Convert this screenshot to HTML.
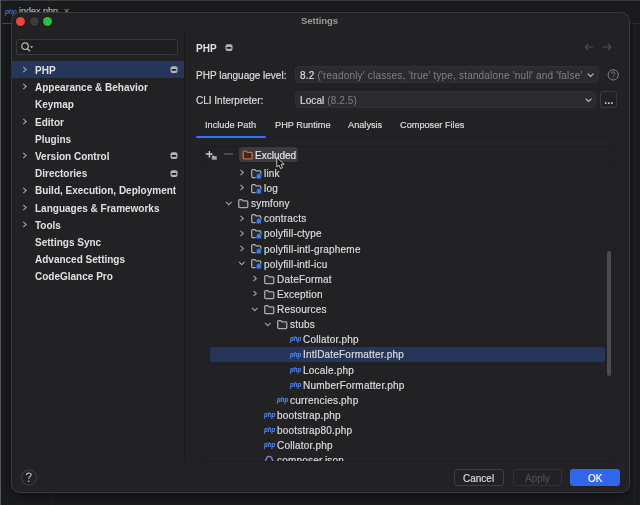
<!DOCTYPE html>
<html><head><meta charset="utf-8"><style>
html,body{margin:0;padding:0;width:640px;height:505px;overflow:hidden;background:#1a1b1d;}
body{position:relative;font-family:"Liberation Sans",sans-serif;}
.t{position:absolute;white-space:pre;will-change:transform;}
.r{position:absolute;}
svg.r{overflow:visible}
</style></head><body>
<div class="r" style="left:0.00px;top:0.00px;width:640.00px;height:1.00px;background:#3a3b3d;border-radius:0px;"></div>
<div class="r" style="left:0.00px;top:0.00px;width:1.20px;height:505.00px;background:#55565a;border-radius:0px;"></div>
<div class="r" style="left:51.00px;top:493.00px;width:1.00px;height:12.00px;background:#232426;border-radius:0px;"></div>
<div class="t" style="left:4.50px;top:7.95px;font-size:7px;line-height:8.05px;color:#3d6fd6;font-weight:400;letter-spacing:0px;-webkit-text-stroke:0.2px #3d6fd6;font-style:italic;">php</div>
<div class="t" style="left:19.00px;top:6.31px;font-size:9px;line-height:10.35px;color:#b8b8ba;font-weight:400;letter-spacing:0px;-webkit-text-stroke:0.18px #b8b8ba;">index.php</div>
<div class="t" style="left:64.00px;top:6.31px;font-size:9px;line-height:10.35px;color:#8a8a8c;font-weight:400;letter-spacing:0px;-webkit-text-stroke:0.18px #8a8a8c;">×</div>
<div class="r" style="left:2.00px;top:22.60px;width:9.00px;height:1.20px;background:#4a4b4d;border-radius:0px;"></div>
<div class="r" style="left:630.00px;top:22.50px;width:10.00px;height:1.00px;background:#2c2d2f;border-radius:0px;"></div>
<div class="r" style="left:634.00px;top:23.00px;width:1.00px;height:482.00px;background:#202123;border-radius:0px;"></div>
<div class="r" style="left:11px;top:12px;width:619px;height:481px;background:#222224;border-radius:9px;box-sizing:border-box;border:1px solid #3a3b3d;box-shadow:0 4px 10px rgba(0,0,0,0.35);"></div>
<div class="r" style="left:15.70px;top:17.10px;width:9px;height:9px;border-radius:50%;background:#f0453f;box-shadow:0 0 0 0.7px rgba(0,0,0,0.35)"></div>
<div class="r" style="left:29.50px;top:17.10px;width:9px;height:9px;border-radius:50%;background:#3c3c3f;box-shadow:0 0 0 0.7px rgba(0,0,0,0.35)"></div>
<div class="r" style="left:43.30px;top:17.10px;width:9px;height:9px;border-radius:50%;background:#2cbf3a;box-shadow:0 0 0 0.7px rgba(0,0,0,0.35)"></div>
<div class="t" style="left:301.25px;top:16.30px;font-size:9.5px;line-height:10.92px;color:#9c9c9e;font-weight:700;letter-spacing:-0.05px;">Settings</div>
<div class="r" style="left:184.00px;top:32.00px;width:1.00px;height:429.00px;background:#1b1b1d;border-radius:0px;"></div>
<div class="r" style="left:12.00px;top:461.00px;width:617.00px;height:1.00px;background:#1f1f21;border-radius:0px;"></div>
<div class="r" style="left:16.30px;top:39.00px;width:162.00px;height:15.60px;background:#1f1f21;border:1px solid #3a3a3d;box-sizing:border-box;border-radius:3px;"></div>
<svg class="r" style="left:19.50px;top:41.20px;" width="16" height="12" viewBox="0 0 16 12"><circle cx="5" cy="5.2" r="3.3" fill="none" stroke="#b8b8ba" stroke-width="1.2"/><line x1="7.4" y1="7.6" x2="10" y2="10.2" stroke="#b8b8ba" stroke-width="1.3"/><path d="M10.2 5.2 L13.2 5.2 L11.7 7.2 Z" fill="#b8b8ba"/></svg>
<div class="r" style="left:11.00px;top:61.30px;width:173.00px;height:17.20px;background:#26355a;border-radius:0px;"></div>
<div class="t" style="left:34.50px;top:65.08px;font-size:10px;line-height:11.50px;color:#dfe0e2;font-weight:700;letter-spacing:0px;">PHP</div>
<svg class="r" style="left:22.00px;top:66.10px;" width="6" height="7" viewBox="0 0 6 7"><path d="M1.2 0.8 L4.2 3.5 L1.2 6.2" fill="none" stroke="#a0a1a4" stroke-width="1.1"/></svg>
<svg class="r" style="left:170.30px;top:66.40px;" width="8" height="7" viewBox="0 0 8 7"><rect x="0.5" y="0.3" width="7" height="6.6" rx="2" fill="#b4b5b8"/><rect x="1.7" y="2.9" width="4.6" height="1.9" rx="0.4" fill="#1a2340"/></svg>
<div class="t" style="left:34.50px;top:82.28px;font-size:10px;line-height:11.50px;color:#dfe0e2;font-weight:700;letter-spacing:0px;">Appearance &amp; Behavior</div>
<svg class="r" style="left:22.00px;top:83.30px;" width="6" height="7" viewBox="0 0 6 7"><path d="M1.2 0.8 L4.2 3.5 L1.2 6.2" fill="none" stroke="#a0a1a4" stroke-width="1.1"/></svg>
<div class="t" style="left:34.50px;top:99.48px;font-size:10px;line-height:11.50px;color:#dfe0e2;font-weight:700;letter-spacing:0px;">Keymap</div>
<div class="t" style="left:34.50px;top:116.68px;font-size:10px;line-height:11.50px;color:#dfe0e2;font-weight:700;letter-spacing:0px;">Editor</div>
<svg class="r" style="left:22.00px;top:117.70px;" width="6" height="7" viewBox="0 0 6 7"><path d="M1.2 0.8 L4.2 3.5 L1.2 6.2" fill="none" stroke="#a0a1a4" stroke-width="1.1"/></svg>
<div class="t" style="left:34.50px;top:133.89px;font-size:10px;line-height:11.50px;color:#dfe0e2;font-weight:700;letter-spacing:0px;">Plugins</div>
<div class="t" style="left:34.50px;top:151.09px;font-size:10px;line-height:11.50px;color:#dfe0e2;font-weight:700;letter-spacing:0px;">Version Control</div>
<svg class="r" style="left:22.00px;top:152.10px;" width="6" height="7" viewBox="0 0 6 7"><path d="M1.2 0.8 L4.2 3.5 L1.2 6.2" fill="none" stroke="#a0a1a4" stroke-width="1.1"/></svg>
<svg class="r" style="left:170.30px;top:152.40px;" width="8" height="7" viewBox="0 0 8 7"><rect x="0.5" y="0.3" width="7" height="6.6" rx="2" fill="#b4b5b8"/><rect x="1.7" y="2.9" width="4.6" height="1.9" rx="0.4" fill="#18181a"/></svg>
<div class="t" style="left:34.50px;top:168.28px;font-size:10px;line-height:11.50px;color:#dfe0e2;font-weight:700;letter-spacing:0px;">Directories</div>
<svg class="r" style="left:170.30px;top:169.60px;" width="8" height="7" viewBox="0 0 8 7"><rect x="0.5" y="0.3" width="7" height="6.6" rx="2" fill="#b4b5b8"/><rect x="1.7" y="2.9" width="4.6" height="1.9" rx="0.4" fill="#18181a"/></svg>
<div class="t" style="left:34.50px;top:185.48px;font-size:10px;line-height:11.50px;color:#dfe0e2;font-weight:700;letter-spacing:0px;">Build, Execution, Deployment</div>
<svg class="r" style="left:22.00px;top:186.50px;" width="6" height="7" viewBox="0 0 6 7"><path d="M1.2 0.8 L4.2 3.5 L1.2 6.2" fill="none" stroke="#a0a1a4" stroke-width="1.1"/></svg>
<div class="t" style="left:34.50px;top:202.69px;font-size:10px;line-height:11.50px;color:#dfe0e2;font-weight:700;letter-spacing:0px;">Languages &amp; Frameworks</div>
<svg class="r" style="left:22.00px;top:203.70px;" width="6" height="7" viewBox="0 0 6 7"><path d="M1.2 0.8 L4.2 3.5 L1.2 6.2" fill="none" stroke="#a0a1a4" stroke-width="1.1"/></svg>
<div class="t" style="left:34.50px;top:219.88px;font-size:10px;line-height:11.50px;color:#dfe0e2;font-weight:700;letter-spacing:0px;">Tools</div>
<svg class="r" style="left:22.00px;top:220.90px;" width="6" height="7" viewBox="0 0 6 7"><path d="M1.2 0.8 L4.2 3.5 L1.2 6.2" fill="none" stroke="#a0a1a4" stroke-width="1.1"/></svg>
<div class="t" style="left:34.50px;top:237.09px;font-size:10px;line-height:11.50px;color:#dfe0e2;font-weight:700;letter-spacing:0px;">Settings Sync</div>
<div class="t" style="left:34.50px;top:254.28px;font-size:10px;line-height:11.50px;color:#dfe0e2;font-weight:700;letter-spacing:0px;">Advanced Settings</div>
<div class="t" style="left:34.50px;top:271.49px;font-size:10px;line-height:11.50px;color:#dfe0e2;font-weight:700;letter-spacing:0px;">CodeGlance Pro</div>
<div class="t" style="left:195.75px;top:42.78px;font-size:10px;line-height:11.50px;color:#dfe0e2;font-weight:700;letter-spacing:0px;">PHP</div>
<svg class="r" style="left:225.30px;top:44.20px;" width="8" height="7" viewBox="0 0 8 7"><rect x="0.5" y="0.3" width="7" height="6.6" rx="2" fill="#b4b5b8"/><rect x="1.7" y="2.9" width="4.6" height="1.9" rx="0.4" fill="#18181a"/></svg>
<svg class="r" style="left:584.00px;top:42.00px;" width="30" height="10" viewBox="0 0 30 10"><path d="M1.4 5 H9.3 M1.4 5 L4.3 2 M1.4 5 L4.3 8" fill="none" stroke="#4d4e52" stroke-width="1.1"/><path d="M26.9 5 H19 M26.9 5 L24 2 M26.9 5 L24 8" fill="none" stroke="#4d4e52" stroke-width="1.1"/></svg>
<div class="t" style="left:195.75px;top:70.18px;font-size:10px;line-height:11.50px;color:#dcdddf;font-weight:400;letter-spacing:0px;-webkit-text-stroke:0.18px #dcdddf;">PHP language level:</div>
<div class="r" style="left:295.00px;top:66.00px;width:304.00px;height:17.40px;background:#2b2b2e;border:1px solid #313134;box-sizing:border-box;border-radius:3.5px;"></div>
<div class="t" style="left:299.80px;top:70.18px;font-size:10px;line-height:11.50px;color:#dcdddf;font-weight:400;letter-spacing:0.18px;-webkit-text-stroke:0.18px #dcdddf;">8.2 <span style="color:#7f8084;-webkit-text-stroke:0">('readonly' classes, 'true' type, standalone 'null' and 'false'</span></div>
<svg class="r" style="left:586.00px;top:72.00px;" width="9" height="6" viewBox="0 0 9 6"><path d="M1.7 1.6 L4.6 4.4 L7.5 1.6" fill="none" stroke="#b9babd" stroke-width="1.2"/></svg>
<svg class="r" style="left:607.20px;top:67.70px;" width="13" height="13" viewBox="0 0 13 13"><circle cx="6.2" cy="6.9" r="5.1" fill="none" stroke="#838488" stroke-width="1"/><path d="M4.6 5.5 Q4.6 3.9 6.2 3.9 Q7.8 3.9 7.8 5.3 Q7.8 6.2 6.8 6.8 Q6.2 7.2 6.2 8.2" fill="none" stroke="#838488" stroke-width="0.95"/><circle cx="6.2" cy="9.8" r="0.55" fill="#838488"/></svg>
<div class="t" style="left:195.75px;top:94.88px;font-size:10px;line-height:11.50px;color:#dcdddf;font-weight:400;letter-spacing:0px;-webkit-text-stroke:0.18px #dcdddf;">CLI Interpreter:</div>
<div class="r" style="left:295.00px;top:91.00px;width:301.30px;height:16.60px;background:#2b2b2e;border:1px solid #313134;box-sizing:border-box;border-radius:3.5px;"></div>
<div class="t" style="left:299.80px;top:94.88px;font-size:10px;line-height:11.50px;color:#dcdddf;font-weight:400;letter-spacing:0.1px;-webkit-text-stroke:0.18px #dcdddf;">Local <span style="color:#7f8084;-webkit-text-stroke:0">(8.2.5)</span></div>
<svg class="r" style="left:583.80px;top:97.00px;" width="9" height="6" viewBox="0 0 9 6"><path d="M1.7 1.6 L4.6 4.4 L7.5 1.6" fill="none" stroke="#b9babd" stroke-width="1.2"/></svg>
<div class="r" style="left:600.00px;top:91.00px;width:17.00px;height:17.00px;background:#222224;border:1px solid #3a3a3d;box-sizing:border-box;border-radius:3px;"></div>
<svg class="r" style="left:603.00px;top:101.00px;" width="12" height="4" viewBox="0 0 12 4"><rect x="1.9" y="1.2" width="1.6" height="1.7" rx="0.3" fill="#d0d1d4"/><rect x="5.0" y="1.2" width="1.6" height="1.7" rx="0.3" fill="#d0d1d4"/><rect x="8.1" y="1.2" width="1.6" height="1.7" rx="0.3" fill="#d0d1d4"/></svg>
<div class="t" style="left:204.80px;top:120.12px;font-size:9.2px;line-height:10.58px;color:#dcdddf;font-weight:400;letter-spacing:0px;-webkit-text-stroke:0.18px #dcdddf;">Include Path</div>
<div class="t" style="left:274.90px;top:120.12px;font-size:9.2px;line-height:10.58px;color:#dcdddf;font-weight:400;letter-spacing:0px;-webkit-text-stroke:0.18px #dcdddf;">PHP Runtime</div>
<div class="t" style="left:348.10px;top:120.12px;font-size:9.2px;line-height:10.58px;color:#dcdddf;font-weight:400;letter-spacing:0px;-webkit-text-stroke:0.18px #dcdddf;">Analysis</div>
<div class="t" style="left:400.20px;top:120.12px;font-size:9.2px;line-height:10.58px;color:#dcdddf;font-weight:400;letter-spacing:0px;-webkit-text-stroke:0.18px #dcdddf;">Composer Files</div>
<div class="r" style="left:196.00px;top:136.30px;width:418.00px;height:1.00px;background:#1e1e20;border-radius:0px;"></div>
<div class="r" style="left:196.00px;top:135.60px;width:69.80px;height:2.20px;background:#3574f0;border-radius:1px;"></div>
<div class="r" style="left:201.50px;top:146.00px;width:412.50px;height:315.50px;background:transparent;border:1px solid #1d1d1f;box-sizing:border-box;border-radius:0px;"></div>
<div class="r" style="left:202.00px;top:162.30px;width:411.00px;height:1.00px;background:#1f1f21;border-radius:0px;"></div>
<svg class="r" style="left:204.00px;top:149.00px;" width="16" height="12" viewBox="0 0 16 12"><path d="M5.4 2 V8.5 M1.8 5 H8.6" stroke="#c9cacd" stroke-width="1.4"/><path d="M7.6 6.8 Q7.6 6.3 8.1 6.3 H9.6 L10.2 6.9 H12.5 Q13 6.9 13 7.4 V10.4 Q13 10.9 12.5 10.9 H8.1 Q7.6 10.9 7.6 10.4 Z" fill="#a9aaad" stroke="#222224" stroke-width="0.6"/></svg>
<div class="r" style="left:223.80px;top:153.40px;width:9.20px;height:1.30px;background:#48494c;border-radius:0px;"></div>
<div class="r" style="left:239.00px;top:147.00px;width:59.00px;height:15.00px;background:#3a3b3e;border-radius:3px;"></div>
<svg class="r" style="left:241.50px;top:149.50px;" width="11" height="10" viewBox="0 0 11 10"><path d="M1.2 2 Q1.2 1.1 2.1 1.1 H4.2 L5.4 2.3 H9.2 Q10.1 2.3 10.1 3.2 V7.9 Q10.1 8.8 9.2 8.8 H2.1 Q1.2 8.8 1.2 7.9 Z" fill="#3b2a21" stroke="#c46b42" stroke-width="1.35" stroke-linejoin="round"/></svg>
<div class="t" style="left:254.50px;top:150.09px;font-size:10px;line-height:11.50px;color:#e2e3e5;font-weight:400;letter-spacing:0px;-webkit-text-stroke:0.18px #e2e3e5;">Excluded</div>
<div class="r" style="left:202px;top:163px;width:411px;height:298.3px;overflow:hidden">
<div class="r" style="left:8.30px;top:183.50px;width:394.30px;height:15.00px;background:#26355a;border-radius:3px;"></div>
<div class="r" style="left:404.90px;top:87.80px;width:4.60px;height:125.60px;background:#4c4c4e;border-radius:2.3px;"></div>
<div class="t" style="left:62.20px;top:4.88px;font-size:10px;line-height:11.50px;color:#dcdddf;font-weight:400;letter-spacing:0.2px;-webkit-text-stroke:0.18px #dcdddf;">link</div>
<svg class="r" style="left:37.40px;top:6.20px;" width="6" height="7" viewBox="0 0 6 7"><path d="M1.5 0.8 L4.3 3.5 L1.5 6.2" fill="none" stroke="#a0a1a4" stroke-width="1.1"/></svg>
<svg class="r" style="left:49.40px;top:5.60px;" width="11" height="11" viewBox="0 0 11 11"><path d="M0.7 1.7 Q0.7 0.7 1.7 0.7 H3.9 L5.1 1.9 H8.8 Q9.8 1.9 9.8 2.9 V7.5 Q9.8 8.5 8.8 8.5 H1.7 Q0.7 8.5 0.7 7.5 Z" fill="#262a33" stroke="#acadb0" stroke-width="1.25" stroke-linejoin="round"/><path d="M5.1 9.9 V6.5 Q5.1 6 5.5 5.7 L7.4 4.1 Q7.8 3.8 8.2 4.1 L10.1 5.7 Q10.5 6 10.5 6.5 V9.9 Z" fill="#3d7bf2" stroke="#222224" stroke-width="0.9" stroke-linejoin="round"/></svg>
<div class="t" style="left:62.20px;top:20.01px;font-size:10px;line-height:11.50px;color:#dcdddf;font-weight:400;letter-spacing:0.2px;-webkit-text-stroke:0.18px #dcdddf;">log</div>
<svg class="r" style="left:37.40px;top:21.33px;" width="6" height="7" viewBox="0 0 6 7"><path d="M1.5 0.8 L4.3 3.5 L1.5 6.2" fill="none" stroke="#a0a1a4" stroke-width="1.1"/></svg>
<svg class="r" style="left:49.40px;top:20.73px;" width="11" height="11" viewBox="0 0 11 11"><path d="M0.7 1.7 Q0.7 0.7 1.7 0.7 H3.9 L5.1 1.9 H8.8 Q9.8 1.9 9.8 2.9 V7.5 Q9.8 8.5 8.8 8.5 H1.7 Q0.7 8.5 0.7 7.5 Z" fill="#262a33" stroke="#acadb0" stroke-width="1.25" stroke-linejoin="round"/><path d="M5.1 9.9 V6.5 Q5.1 6 5.5 5.7 L7.4 4.1 Q7.8 3.8 8.2 4.1 L10.1 5.7 Q10.5 6 10.5 6.5 V9.9 Z" fill="#3d7bf2" stroke="#222224" stroke-width="0.9" stroke-linejoin="round"/></svg>
<div class="t" style="left:49.20px;top:35.14px;font-size:10px;line-height:11.50px;color:#dcdddf;font-weight:400;letter-spacing:0.2px;-webkit-text-stroke:0.18px #dcdddf;">symfony</div>
<svg class="r" style="left:23.40px;top:37.66px;" width="8" height="5" viewBox="0 0 8 5"><path d="M1 0.9 L3.8 3.7 L6.6 0.9" fill="none" stroke="#a0a1a4" stroke-width="1.1"/></svg>
<svg class="r" style="left:36.40px;top:35.86px;" width="11" height="10" viewBox="0 0 11 10"><path d="M0.7 1.7 Q0.7 0.7 1.7 0.7 H3.9 L5.1 1.9 H8.8 Q9.8 1.9 9.8 2.9 V7.5 Q9.8 8.5 8.8 8.5 H1.7 Q0.7 8.5 0.7 7.5 Z" fill="#262a33" stroke="#acadb0" stroke-width="1.25" stroke-linejoin="round"/></svg>
<div class="t" style="left:62.20px;top:50.28px;font-size:10px;line-height:11.50px;color:#dcdddf;font-weight:400;letter-spacing:0.2px;-webkit-text-stroke:0.18px #dcdddf;">contracts</div>
<svg class="r" style="left:37.40px;top:51.59px;" width="6" height="7" viewBox="0 0 6 7"><path d="M1.5 0.8 L4.3 3.5 L1.5 6.2" fill="none" stroke="#a0a1a4" stroke-width="1.1"/></svg>
<svg class="r" style="left:49.40px;top:50.99px;" width="11" height="11" viewBox="0 0 11 11"><path d="M0.7 1.7 Q0.7 0.7 1.7 0.7 H3.9 L5.1 1.9 H8.8 Q9.8 1.9 9.8 2.9 V7.5 Q9.8 8.5 8.8 8.5 H1.7 Q0.7 8.5 0.7 7.5 Z" fill="#262a33" stroke="#acadb0" stroke-width="1.25" stroke-linejoin="round"/><path d="M5.1 9.9 V6.5 Q5.1 6 5.5 5.7 L7.4 4.1 Q7.8 3.8 8.2 4.1 L10.1 5.7 Q10.5 6 10.5 6.5 V9.9 Z" fill="#3d7bf2" stroke="#222224" stroke-width="0.9" stroke-linejoin="round"/></svg>
<div class="t" style="left:62.20px;top:65.41px;font-size:10px;line-height:11.50px;color:#dcdddf;font-weight:400;letter-spacing:0.2px;-webkit-text-stroke:0.18px #dcdddf;">polyfill-ctype</div>
<svg class="r" style="left:37.40px;top:66.72px;" width="6" height="7" viewBox="0 0 6 7"><path d="M1.5 0.8 L4.3 3.5 L1.5 6.2" fill="none" stroke="#a0a1a4" stroke-width="1.1"/></svg>
<svg class="r" style="left:49.40px;top:66.12px;" width="11" height="11" viewBox="0 0 11 11"><path d="M0.7 1.7 Q0.7 0.7 1.7 0.7 H3.9 L5.1 1.9 H8.8 Q9.8 1.9 9.8 2.9 V7.5 Q9.8 8.5 8.8 8.5 H1.7 Q0.7 8.5 0.7 7.5 Z" fill="#262a33" stroke="#acadb0" stroke-width="1.25" stroke-linejoin="round"/><path d="M5.1 9.9 V6.5 Q5.1 6 5.5 5.7 L7.4 4.1 Q7.8 3.8 8.2 4.1 L10.1 5.7 Q10.5 6 10.5 6.5 V9.9 Z" fill="#3d7bf2" stroke="#222224" stroke-width="0.9" stroke-linejoin="round"/></svg>
<div class="t" style="left:62.20px;top:80.53px;font-size:10px;line-height:11.50px;color:#dcdddf;font-weight:400;letter-spacing:0.2px;-webkit-text-stroke:0.18px #dcdddf;">polyfill-intl-grapheme</div>
<svg class="r" style="left:37.40px;top:81.85px;" width="6" height="7" viewBox="0 0 6 7"><path d="M1.5 0.8 L4.3 3.5 L1.5 6.2" fill="none" stroke="#a0a1a4" stroke-width="1.1"/></svg>
<svg class="r" style="left:49.40px;top:81.25px;" width="11" height="11" viewBox="0 0 11 11"><path d="M0.7 1.7 Q0.7 0.7 1.7 0.7 H3.9 L5.1 1.9 H8.8 Q9.8 1.9 9.8 2.9 V7.5 Q9.8 8.5 8.8 8.5 H1.7 Q0.7 8.5 0.7 7.5 Z" fill="#262a33" stroke="#acadb0" stroke-width="1.25" stroke-linejoin="round"/><path d="M5.1 9.9 V6.5 Q5.1 6 5.5 5.7 L7.4 4.1 Q7.8 3.8 8.2 4.1 L10.1 5.7 Q10.5 6 10.5 6.5 V9.9 Z" fill="#3d7bf2" stroke="#222224" stroke-width="0.9" stroke-linejoin="round"/></svg>
<div class="t" style="left:62.20px;top:95.66px;font-size:10px;line-height:11.50px;color:#dcdddf;font-weight:400;letter-spacing:0.2px;-webkit-text-stroke:0.18px #dcdddf;">polyfill-intl-icu</div>
<svg class="r" style="left:36.40px;top:98.18px;" width="8" height="5" viewBox="0 0 8 5"><path d="M1 0.9 L3.8 3.7 L6.6 0.9" fill="none" stroke="#a0a1a4" stroke-width="1.1"/></svg>
<svg class="r" style="left:49.40px;top:96.38px;" width="11" height="11" viewBox="0 0 11 11"><path d="M0.7 1.7 Q0.7 0.7 1.7 0.7 H3.9 L5.1 1.9 H8.8 Q9.8 1.9 9.8 2.9 V7.5 Q9.8 8.5 8.8 8.5 H1.7 Q0.7 8.5 0.7 7.5 Z" fill="#262a33" stroke="#acadb0" stroke-width="1.25" stroke-linejoin="round"/><path d="M5.1 9.9 V6.5 Q5.1 6 5.5 5.7 L7.4 4.1 Q7.8 3.8 8.2 4.1 L10.1 5.7 Q10.5 6 10.5 6.5 V9.9 Z" fill="#3d7bf2" stroke="#222224" stroke-width="0.9" stroke-linejoin="round"/></svg>
<div class="t" style="left:75.20px;top:110.79px;font-size:10px;line-height:11.50px;color:#dcdddf;font-weight:400;letter-spacing:0.2px;-webkit-text-stroke:0.18px #dcdddf;">DateFormat</div>
<svg class="r" style="left:50.40px;top:112.11px;" width="6" height="7" viewBox="0 0 6 7"><path d="M1.5 0.8 L4.3 3.5 L1.5 6.2" fill="none" stroke="#a0a1a4" stroke-width="1.1"/></svg>
<svg class="r" style="left:62.40px;top:111.51px;" width="11" height="10" viewBox="0 0 11 10"><path d="M0.7 1.7 Q0.7 0.7 1.7 0.7 H3.9 L5.1 1.9 H8.8 Q9.8 1.9 9.8 2.9 V7.5 Q9.8 8.5 8.8 8.5 H1.7 Q0.7 8.5 0.7 7.5 Z" fill="#262a33" stroke="#acadb0" stroke-width="1.25" stroke-linejoin="round"/></svg>
<div class="t" style="left:75.20px;top:125.92px;font-size:10px;line-height:11.50px;color:#dcdddf;font-weight:400;letter-spacing:0.2px;-webkit-text-stroke:0.18px #dcdddf;">Exception</div>
<svg class="r" style="left:50.40px;top:127.24px;" width="6" height="7" viewBox="0 0 6 7"><path d="M1.5 0.8 L4.3 3.5 L1.5 6.2" fill="none" stroke="#a0a1a4" stroke-width="1.1"/></svg>
<svg class="r" style="left:62.40px;top:126.64px;" width="11" height="10" viewBox="0 0 11 10"><path d="M0.7 1.7 Q0.7 0.7 1.7 0.7 H3.9 L5.1 1.9 H8.8 Q9.8 1.9 9.8 2.9 V7.5 Q9.8 8.5 8.8 8.5 H1.7 Q0.7 8.5 0.7 7.5 Z" fill="#262a33" stroke="#acadb0" stroke-width="1.25" stroke-linejoin="round"/></svg>
<div class="t" style="left:75.20px;top:141.05px;font-size:10px;line-height:11.50px;color:#dcdddf;font-weight:400;letter-spacing:0.2px;-webkit-text-stroke:0.18px #dcdddf;">Resources</div>
<svg class="r" style="left:49.40px;top:143.57px;" width="8" height="5" viewBox="0 0 8 5"><path d="M1 0.9 L3.8 3.7 L6.6 0.9" fill="none" stroke="#a0a1a4" stroke-width="1.1"/></svg>
<svg class="r" style="left:62.40px;top:141.77px;" width="11" height="10" viewBox="0 0 11 10"><path d="M0.7 1.7 Q0.7 0.7 1.7 0.7 H3.9 L5.1 1.9 H8.8 Q9.8 1.9 9.8 2.9 V7.5 Q9.8 8.5 8.8 8.5 H1.7 Q0.7 8.5 0.7 7.5 Z" fill="#262a33" stroke="#acadb0" stroke-width="1.25" stroke-linejoin="round"/></svg>
<div class="t" style="left:88.20px;top:156.18px;font-size:10px;line-height:11.50px;color:#dcdddf;font-weight:400;letter-spacing:0.2px;-webkit-text-stroke:0.18px #dcdddf;">stubs</div>
<svg class="r" style="left:62.40px;top:158.70px;" width="8" height="5" viewBox="0 0 8 5"><path d="M1 0.9 L3.8 3.7 L6.6 0.9" fill="none" stroke="#a0a1a4" stroke-width="1.1"/></svg>
<svg class="r" style="left:75.40px;top:156.90px;" width="11" height="10" viewBox="0 0 11 10"><path d="M0.7 1.7 Q0.7 0.7 1.7 0.7 H3.9 L5.1 1.9 H8.8 Q9.8 1.9 9.8 2.9 V7.5 Q9.8 8.5 8.8 8.5 H1.7 Q0.7 8.5 0.7 7.5 Z" fill="#262a33" stroke="#acadb0" stroke-width="1.25" stroke-linejoin="round"/></svg>
<div class="t" style="left:101.20px;top:171.31px;font-size:10px;line-height:11.50px;color:#dcdddf;font-weight:400;letter-spacing:0.2px;-webkit-text-stroke:0.18px #dcdddf;">Collator.php</div>
<svg class="r" style="left:87.80px;top:173.43px;" width="12" height="8" viewBox="0 0 12 8"><text x="0" y="5.3" transform="scale(1,0.88)" font-family="Liberation Sans" font-size="7.6" font-style="italic" font-weight="700" fill="#4f82ea" stroke="#4f82ea" stroke-width="0.2" textLength="11.2" lengthAdjust="spacingAndGlyphs">php</text></svg>
<div class="t" style="left:101.20px;top:186.44px;font-size:10px;line-height:11.50px;color:#dcdddf;font-weight:400;letter-spacing:0.2px;-webkit-text-stroke:0.18px #dcdddf;">IntlDateFormatter.php</div>
<svg class="r" style="left:87.80px;top:188.56px;" width="12" height="8" viewBox="0 0 12 8"><text x="0" y="5.3" transform="scale(1,0.88)" font-family="Liberation Sans" font-size="7.6" font-style="italic" font-weight="700" fill="#4f82ea" stroke="#4f82ea" stroke-width="0.2" textLength="11.2" lengthAdjust="spacingAndGlyphs">php</text></svg>
<div class="t" style="left:101.20px;top:201.57px;font-size:10px;line-height:11.50px;color:#dcdddf;font-weight:400;letter-spacing:0.2px;-webkit-text-stroke:0.18px #dcdddf;">Locale.php</div>
<svg class="r" style="left:87.80px;top:203.69px;" width="12" height="8" viewBox="0 0 12 8"><text x="0" y="5.3" transform="scale(1,0.88)" font-family="Liberation Sans" font-size="7.6" font-style="italic" font-weight="700" fill="#4f82ea" stroke="#4f82ea" stroke-width="0.2" textLength="11.2" lengthAdjust="spacingAndGlyphs">php</text></svg>
<div class="t" style="left:101.20px;top:216.71px;font-size:10px;line-height:11.50px;color:#dcdddf;font-weight:400;letter-spacing:0.2px;-webkit-text-stroke:0.18px #dcdddf;">NumberFormatter.php</div>
<svg class="r" style="left:87.80px;top:218.82px;" width="12" height="8" viewBox="0 0 12 8"><text x="0" y="5.3" transform="scale(1,0.88)" font-family="Liberation Sans" font-size="7.6" font-style="italic" font-weight="700" fill="#4f82ea" stroke="#4f82ea" stroke-width="0.2" textLength="11.2" lengthAdjust="spacingAndGlyphs">php</text></svg>
<div class="t" style="left:88.20px;top:231.84px;font-size:10px;line-height:11.50px;color:#dcdddf;font-weight:400;letter-spacing:0.2px;-webkit-text-stroke:0.18px #dcdddf;">currencies.php</div>
<svg class="r" style="left:74.80px;top:233.95px;" width="12" height="8" viewBox="0 0 12 8"><text x="0" y="5.3" transform="scale(1,0.88)" font-family="Liberation Sans" font-size="7.6" font-style="italic" font-weight="700" fill="#4f82ea" stroke="#4f82ea" stroke-width="0.2" textLength="11.2" lengthAdjust="spacingAndGlyphs">php</text></svg>
<div class="t" style="left:75.20px;top:246.97px;font-size:10px;line-height:11.50px;color:#dcdddf;font-weight:400;letter-spacing:0.2px;-webkit-text-stroke:0.18px #dcdddf;">bootstrap.php</div>
<svg class="r" style="left:61.80px;top:249.08px;" width="12" height="8" viewBox="0 0 12 8"><text x="0" y="5.3" transform="scale(1,0.88)" font-family="Liberation Sans" font-size="7.6" font-style="italic" font-weight="700" fill="#4f82ea" stroke="#4f82ea" stroke-width="0.2" textLength="11.2" lengthAdjust="spacingAndGlyphs">php</text></svg>
<div class="t" style="left:75.20px;top:262.10px;font-size:10px;line-height:11.50px;color:#dcdddf;font-weight:400;letter-spacing:0.2px;-webkit-text-stroke:0.18px #dcdddf;">bootstrap80.php</div>
<svg class="r" style="left:61.80px;top:264.21px;" width="12" height="8" viewBox="0 0 12 8"><text x="0" y="5.3" transform="scale(1,0.88)" font-family="Liberation Sans" font-size="7.6" font-style="italic" font-weight="700" fill="#4f82ea" stroke="#4f82ea" stroke-width="0.2" textLength="11.2" lengthAdjust="spacingAndGlyphs">php</text></svg>
<div class="t" style="left:75.20px;top:277.23px;font-size:10px;line-height:11.50px;color:#dcdddf;font-weight:400;letter-spacing:0.2px;-webkit-text-stroke:0.18px #dcdddf;">Collator.php</div>
<svg class="r" style="left:61.80px;top:279.34px;" width="12" height="8" viewBox="0 0 12 8"><text x="0" y="5.3" transform="scale(1,0.88)" font-family="Liberation Sans" font-size="7.6" font-style="italic" font-weight="700" fill="#4f82ea" stroke="#4f82ea" stroke-width="0.2" textLength="11.2" lengthAdjust="spacingAndGlyphs">php</text></svg>
<div class="t" style="left:75.20px;top:292.36px;font-size:10px;line-height:11.50px;color:#dcdddf;font-weight:400;letter-spacing:0.2px;-webkit-text-stroke:0.18px #dcdddf;">composer.json</div>
<svg class="r" style="left:62.00px;top:292.00px;" width="11" height="8" viewBox="0 0 11 8"><path d="M1.3 6.5 L2.7 2.9 Q3.3 1.5 4.4 1.5 H5.3" fill="none" stroke="#9570e0" stroke-width="1.4" stroke-linecap="round"/><path d="M9.1 6.5 L7.7 2.9 Q7.1 1.5 6 1.5 H5.9" fill="none" stroke="#9570e0" stroke-width="1.4" stroke-linecap="round"/></svg>
</div>
<svg class="r" style="left:276.00px;top:157.20px;" width="10" height="14" viewBox="0 0 10 14"><path d="M0.8 0.6 L0.8 9.9 L3.0 8.0 L4.6 11.5 L6.5 10.7 L5.0 7.3 L8.1 7.3 Z" fill="#050505" stroke="#e6e6e6" stroke-width="0.85" stroke-linejoin="round"/></svg>
<svg class="r" style="left:19.50px;top:467.80px;" width="18" height="18" viewBox="0 0 18 18"><circle cx="8.95" cy="9.55" r="7.6" fill="none" stroke="#3c3d40" stroke-width="1.05"/><path d="M6.5 7.0 Q6.5 4.9 8.8 4.9 Q11.1 4.9 11.1 6.8 Q11.1 8.0 9.6 8.9 Q8.8 9.4 8.8 10.9" fill="none" stroke="#c4c5c8" stroke-width="1.05"/><circle cx="8.8" cy="13.3" r="0.75" fill="#c4c5c8"/></svg>
<div class="r" style="left:454.00px;top:469.00px;width:50.00px;height:16.60px;background:#222224;border:1px solid #3e3f42;box-sizing:border-box;border-radius:3px;"></div>
<div class="t" style="left:463.30px;top:473.19px;font-size:10px;line-height:11.50px;color:#dcdddf;font-weight:400;letter-spacing:0px;-webkit-text-stroke:0.18px #dcdddf;">Cancel</div>
<div class="r" style="left:512.50px;top:469.00px;width:49.50px;height:16.60px;background:#222224;border:1px solid #323335;box-sizing:border-box;border-radius:3px;"></div>
<div class="t" style="left:524.70px;top:473.19px;font-size:10px;line-height:11.50px;color:#4c4d51;font-weight:400;letter-spacing:0px;-webkit-text-stroke:0.18px #4c4d51;">Apply</div>
<div class="r" style="left:570.00px;top:469.00px;width:50.00px;height:16.60px;background:#3067ea;border-radius:3px;"></div>
<div class="t" style="left:587.70px;top:473.19px;font-size:10px;line-height:11.50px;color:#ffffff;font-weight:400;letter-spacing:0px;-webkit-text-stroke:0.18px #ffffff;">OK</div>
</body></html>
